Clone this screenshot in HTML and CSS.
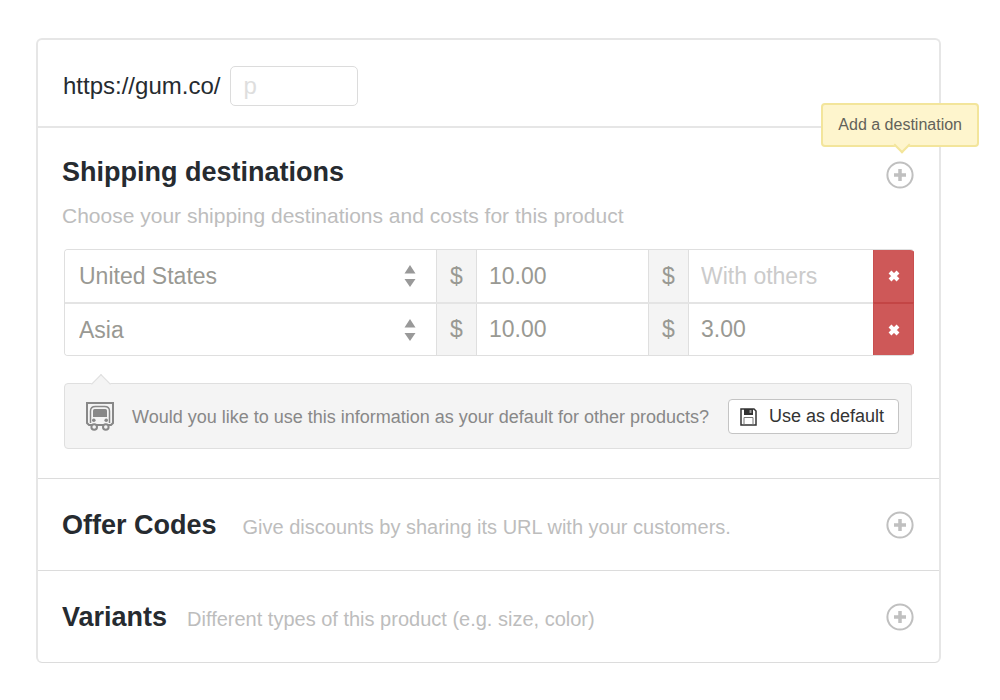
FILE: index.html
```html
<!DOCTYPE html>
<html lang="en">
<head>
<meta charset="utf-8">
<meta name="viewport" content="width=device-width, initial-scale=1">
<title>Product options</title>
<link rel="stylesheet" href="styles.css">
</head>
<body>
<main class="card">
  <section class="section url-section">
    <label class="url-label" for="permalink">https://gum.co/</label>
    <input class="url-input" id="permalink" type="text" placeholder="p">
  </section>

  <section class="section shipping">
    <div class="section-head head-top">
      <h2 class="section-title">Shipping destinations</h2>
      <div class="add-wrap">
        <button class="add-button" type="button" aria-label="Add a destination" aria-describedby="add-tip">
          <svg class="icon-plus" viewBox="0 0 28 28" aria-hidden="true"><circle cx="14" cy="14" r="12.6"/><path d="M14 8v12M8 14h12"/></svg>
        </button>
        <div class="tooltip" id="add-tip" role="tooltip">Add a destination</div>
      </div>
    </div>
    <p class="section-note">Choose your shipping destinations and costs for this product</p>

    <div class="rates">
      <div class="rate-row">
        <div class="select-wrap">
          <select class="field" aria-label="Destination"><option>United States</option><option>Asia</option></select>
          <svg class="icon-sort" viewBox="0 0 12 22" aria-hidden="true"><path d="M6 0l5.500 8.500H.5zM6 22l5.500-8H.5z"/></svg>
        </div>
        <span class="currency">$</span>
        <input class="field" type="text" value="10.00" aria-label="Cost alone">
        <span class="currency">$</span>
        <input class="field" type="text" placeholder="With others" aria-label="Cost with others">
        <button class="remove" type="button" aria-label="Remove United States">
          <svg class="icon-x" viewBox="0 0 12 12" aria-hidden="true"><path d="M2 2l8 8M10 2l-8 8"/></svg>
        </button>
      </div>
      <div class="rate-row">
        <div class="select-wrap">
          <select class="field" aria-label="Destination"><option>Asia</option><option>United States</option></select>
          <svg class="icon-sort" viewBox="0 0 12 22" aria-hidden="true"><path d="M6 0l5.500 8.500H.5zM6 22l5.500-8H.5z"/></svg>
        </div>
        <span class="currency">$</span>
        <input class="field" type="text" value="10.00" aria-label="Cost alone">
        <span class="currency">$</span>
        <input class="field" type="text" value="3.00" placeholder="With others" aria-label="Cost with others">
        <button class="remove" type="button" aria-label="Remove Asia">
          <svg class="icon-x" viewBox="0 0 12 12" aria-hidden="true"><path d="M2 2l8 8M10 2l-8 8"/></svg>
        </button>
      </div>
    </div>

    <div class="callout">
      <svg class="icon-truck" viewBox="0 0 28 29" aria-hidden="true">
        <path class="line" d="M1 1h26v20l-2 2H3l-2-2z"/>
        <path class="thin" d="M4.500 21V9q0-4.500 5-4.500h9q5 0 5 4.500v12"/>
        <path class="solid" d="M7 8.500q0-1.500 1.500-1.500h11q1.500 0 1.500 1.500V15H7z"/>
        <circle class="solid" cx="7.800" cy="18.300" r="1.800"/><circle class="solid" cx="20.200" cy="18.300" r="1.800"/>
        <circle class="wheel" cx="8.200" cy="25" r="2.800"/><circle class="wheel" cx="19.800" cy="25" r="2.800"/>
      </svg>
      <p class="callout-text">Would you like to use this information as your default for other products?</p>
      <button class="default-button" type="button">
        <svg class="icon-save" viewBox="0 0 17 18" aria-hidden="true">
          <path class="line" d="M1 1h13l2 2v14H1z"/>
          <path class="solid" d="M4 1h9v6H4z"/><path class="slot" d="M9.500 2h2v3h-2z"/>
          <path class="paper" d="M4 17V9.500h9V17"/>
        </svg>
        Use as default
      </button>
    </div>
  </section>

  <section class="section compact">
    <div class="section-head">
      <h2 class="section-title title-spaced">Offer Codes</h2>
      <p class="section-note inline-note">Give discounts by sharing its URL with your customers.</p>
      <button class="add-button" type="button" aria-label="Add an offer code">
        <svg class="icon-plus" viewBox="0 0 28 28" aria-hidden="true"><circle cx="14" cy="14" r="12.600"/><path d="M14 8v12M8 14h12"/></svg>
      </button>
    </div>
  </section>

  <section class="section compact">
    <div class="section-head">
      <h2 class="section-title">Variants</h2>
      <p class="section-note inline-note">Different types of this product (e.g. size, color)</p>
      <button class="add-button" type="button" aria-label="Add a variant">
        <svg class="icon-plus" viewBox="0 0 28 28" aria-hidden="true"><circle cx="14" cy="14" r="12.600"/><path d="M14 8v12M8 14h12"/></svg>
      </button>
    </div>
  </section>
</main>
</body>
</html>
```
FILE: styles.css
```css
* { box-sizing: border-box; }

body {
  margin: 0;
  padding: 38px 59px 36px 36px;
  background: #fff;
  color: #262b30;
  font-family: "Liberation Sans", Arial, sans-serif;
}

button, input, select { font: inherit; margin: 0; }
svg { display: block; flex: none; }

.card {
  border: 2px solid #e6e6e6;
  border-bottom: 1px solid #dcdcdc;
  border-radius: 6px;
}

.section { padding: 0 25px 0 24px; }
.section + .section { border-top: 1px solid #dcdcdc; }
.url-section + .section { border-top: 2px solid #e6e6e6; }

.url-section {
  display: flex;
  align-items: center;
  gap: 10px;
  padding: 26px 25px 20px;
}
.url-label { font-size: 24px; line-height: 40px; }
.url-input {
  width: 128px;
  height: 40px;
  padding: 0 12px;
  border: 1px solid #dcdcdc;
  border-radius: 5px;
  font-size: 24px;
}
.url-input::placeholder { color: #dedede; opacity: 1; }

.section.shipping { padding-top: 30px; padding-bottom: 29px; }
.compact { padding-top: 32px; padding-bottom: 31px; }

.section-head { display: flex; align-items: center; gap: 20px; }
.head-top { align-items: flex-start; }
.section-title { margin: 0; font-size: 27px; line-height: 28px; white-space: nowrap; }
.title-spaced { margin-right: 6px; }
.section-note { margin: 11px 0 21px; color: #bdbdbd; font-size: 21px; line-height: 24px; }
.inline-note { margin: 4px 0 0; font-size: 20px; }

.add-wrap { position: relative; margin-top: 3px; margin-left: auto; }
.add-button { margin-left: auto; padding: 0; border: 0; background: none; cursor: pointer; }
.icon-plus { width: 28px; height: 28px; fill: none; stroke: #c0c0c0; stroke-width: 2; }
.icon-plus path { stroke-width: 3.5; }

.tooltip {
  position: absolute;
  right: -65px;
  bottom: calc(100% + 14px);
  padding: 11px 15px;
  border: 2px solid #f3e59b;
  border-radius: 4px;
  background: #fef5cd;
  color: #62625a;
  font-size: 16px;
  line-height: 18px;
  white-space: nowrap;
}
.tooltip::after {
  content: "";
  position: absolute;
  left: calc(50% - 4px);
  bottom: -6px;
  width: 10px;
  height: 10px;
  border: solid #f3e59b;
  border-width: 0 2px 2px 0;
  background: #fef5cd;
  transform: rotate(45deg);
}

.rates {
  margin-left: 2px;
  border: 1px solid #dfdfdf;
  border-right: 0;
  border-radius: 4px;
  overflow: hidden;
}
.rate-row {
  display: grid;
  grid-template-columns: 371fr 41px 171fr 41px 184fr 41px;
  height: 52px;
}
.rate-row + .rate-row { height: 53px; border-top: 2px solid #e4e4e4; }
.rate-row + .rate-row .remove { margin-top: -2px; border-top: 2px solid #c34545; }

.field {
  width: 100%;
  min-width: 0;
  height: 100%;
  padding: 0 12px;
  border: 0;
  border-radius: 0;
  background: #fff;
  color: #999993;
  font-size: 23px;
  appearance: none;
}
.field::placeholder { color: #cbcbcb; opacity: 1; }
.select-wrap { display: grid; align-items: center; }
.select-wrap > * { grid-area: 1 / 1; }
.select-wrap .field { padding-left: 14px; }
.icon-sort {
  justify-self: end;
  width: 12px;
  height: 22px;
  margin-right: 20px;
  fill: #999;
  pointer-events: none;
}
.currency {
  display: flex;
  align-items: center;
  justify-content: center;
  border: solid #dfdfdf;
  border-width: 0 1px;
  background: #f4f4f4;
  color: #999993;
  font-size: 23px;
}
.remove {
  display: flex;
  align-items: center;
  justify-content: center;
  padding: 0;
  border: 1px solid #c94f4f;
  border-width: 0 1px;
  background: #ce5858;
}
.icon-x { width: 12px; height: 12px; fill: none; stroke: #fff; stroke-width: 4; }

.callout {
  position: relative;
  display: flex;
  align-items: center;
  margin: 27px 2px 0;
  padding: 15px 12px 14px 21px;
  border: 1px solid #dfdfdf;
  border-radius: 4px;
  background: #f4f4f4;
}
.callout::before {
  content: "";
  position: absolute;
  left: 29px;
  top: -7px;
  width: 13px;
  height: 13px;
  border: solid #dfdfdf;
  border-width: 1px 0 0 1px;
  background: #f4f4f4;
  transform: rotate(45deg);
}
.callout-text { margin: 0 auto 0 18px; color: #888; font-size: 18px; line-height: 24px; }

.icon-truck { width: 28px; height: 29px; fill: none; stroke: #888; }
.icon-truck .line { stroke-width: 2; }
.icon-truck .thin { stroke-width: 1.5; }
.icon-truck .wheel { fill: #f4f4f4; stroke-width: 2; }
.icon-truck .solid { fill: #888; stroke: none; }

.default-button {
  display: flex;
  align-items: center;
  gap: 12px;
  height: 35px;
  padding: 0 14px 0 11px;
  border: 1px solid #c4c4c4;
  border-radius: 4px;
  background: #fff;
  color: #333;
  font-size: 18px;
  white-space: nowrap;
}
.icon-save { width: 17px; height: 18px; fill: none; stroke: #333; }
.icon-save .line { stroke-width: 1.5; }
.icon-save .solid { fill: #333; stroke: none; }
.icon-save .slot { fill: #999; stroke: none; }
.icon-save .paper { stroke: #777; }
```
